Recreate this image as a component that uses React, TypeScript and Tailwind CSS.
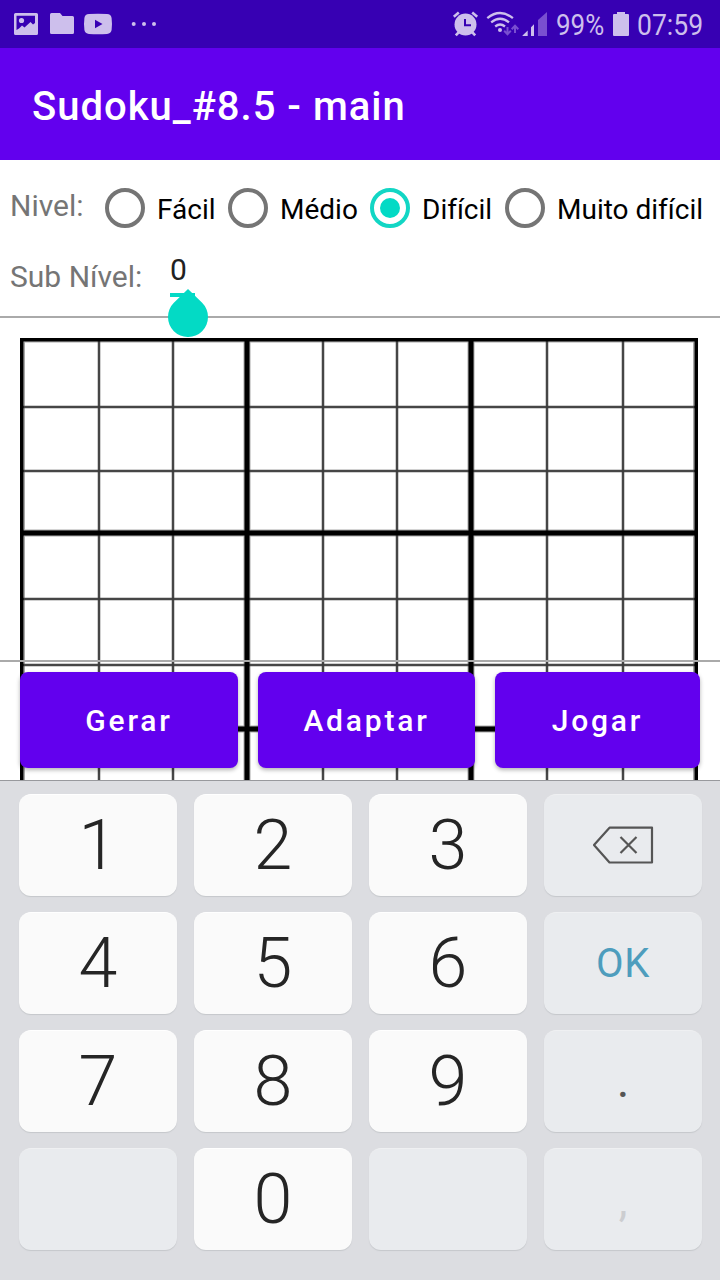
import React, { useState } from "react";

const LEVELS = ["Fácil", "Médio", "Difícil", "Muito difícil"];
const RADIO_BOXES = ["w-[123px]", "w-[142px]", "w-[135px]", "w-[215px]"];
const ACTIONS = [
  { label: "Gerar", box: "w-[218px]" },
  { label: "Adaptar", box: "w-[217px]" },
  { label: "Jogar", box: "w-[205px]" },
];

const THIN_COLUMNS = [99, 173, 323, 397, 547, 623];
const THICK_COLUMNS = [247, 471];
const THIN_ROWS = [407, 471, 599, 665];
const THICK_ROWS = [533, 729];

function StatusBar() {
  return (
    <header className="flex h-12 shrink-0 items-start bg-[#3700b3] text-[#cdbfec]">
      <svg className="h-12 w-[170px]" viewBox="0 0 170 48" fill="currentColor">
        <path
          fillRule="evenodd"
          d="M15.500 13h21a1.500 1.500 0 0 1 1.500 1.500v19a1.500 1.500 0 0 1-1.500 1.500h-21a1.500 1.500 0 0 1-1.500-1.500v-19a1.500 1.500 0 0 1 1.500-1.500Zm1 2.700v14.300l2.500-1.500 3-3 2.500 2 6-5.500 2.500 2.500 2-1.500V15.700Z"
        />
        <circle cx="21.500" cy="20.500" r="2.600" />
        <path d="M51.500 13H60l2.500 3H72.500a1.500 1.500 0 0 1 1.500 1.500V32.500a1.500 1.500 0 0 1-1.500 1.500h-21a1.500 1.500 0 0 1-1.500-1.500v-18a1.500 1.500 0 0 1 1.500-1.500Z" />
        <path
          fillRule="evenodd"
          d="M89 14q9-.7 18 0 4 0 4.600 4 .8 6 0 12-.6 3.600-4.600 4-9 .7-18 0-4-.4-4.600-4-.8-6 0-12 .6-4 4.600-4Zm6 5.800v8.400l7.500-4.200Z"
        />
        <circle cx="133.700" cy="24" r="2" />
        <circle cx="144" cy="24" r="2" />
        <circle cx="154" cy="24" r="2" />
      </svg>
      <svg className="ml-[270px] h-12 w-[116px] shrink-0" viewBox="440 0 116 48" fill="none">
        <circle cx="465.500" cy="24.500" r="11" fill="currentColor" />
        <path
          d="m453.800 16.800 5-4.200m18.400 4.200-5-4.200"
          stroke="currentColor"
          strokeWidth="2.600"
        />
        <path d="m459 32-3.200 3.400M472 32l3.200 3.400" stroke="currentColor" strokeWidth="2.600" />
        <path d="M465 19v6.200h6" stroke="#3700b3" strokeWidth="2" />
        <path
          d="M487.300 18.200q12.700-10.400 25.600 0M491.200 22.400q8.900-7.200 17.800 0M495.200 26.500q4.900-3.900 9.800 0"
          stroke="currentColor"
          strokeWidth="2.300"
        />
        <circle cx="500" cy="30" r="2" fill="currentColor" />
        <path
          d="M507.500 27v7m-3.300-3.200 3.300 3.400 3.300-3.400M515 33v-7m-3.300 3.200 3.300-3.400 3.300 3.400"
          stroke="#794fd0"
          strokeWidth="2"
        />
        <path d="M522.500 36v-.5l5.200-5V36ZM531 36v-8.800l3-2.900V36Z" fill="currentColor" />
        <path d="M538 36V20l9-8v24Z" fill="#794fd0" />
      </svg>
      <span className="mt-[7px] inline-block w-[52px] origin-left scale-x-[.865] whitespace-nowrap text-[30px] leading-[35px]">
        99%
      </span>
      <svg className="ml-[5px] h-12 w-4" viewBox="613 0 16 48" fill="currentColor">
        <path d="M614 14h3v-2h8v2h3q1 0 1 1v20q0 1-1 1h-14q-1 0-1-1V15q0-1 1-1Z" />
      </svg>
      <span className="ml-2 mt-[7px] inline-block w-[66px] origin-left scale-x-[.885] whitespace-nowrap text-[30px] leading-[35px]">
        07:59
      </span>
    </header>
  );
}

function LevelPicker() {
  const [level, setLevel] = useState(2);
  return (
    <div className="flex h-[76px] pl-[10px] pt-6">
      <span className="w-[95px] pt-1 text-[30px] leading-[35px] text-[#757575]">Nivel:</span>
      {LEVELS.map((name, i) => (
        <button
          key={name}
          onClick={() => setLevel(i)}
          className={"flex h-12 shrink-0 items-center gap-3 " + RADIO_BOXES[i]}
        >
          <svg className="size-10 shrink-0" viewBox="0 0 40 40" fill="none">
            <circle cx="20" cy="20" r="18" stroke={i === level ? "#12d6c4" : "#757575"} strokeWidth="4" />
            {i === level && <circle cx="20" cy="20" r="10" fill="#03dac5" />}
          </svg>
          <span className="whitespace-nowrap pt-1 text-[28px] leading-8 text-black">{name}</span>
        </button>
      ))}
    </div>
  );
}

function SubLevel() {
  return (
    <div className="relative flex h-[82px] border-b-2 border-[#aaaaaa] pl-[10px]">
      <span className="w-[160px] pt-[23px] text-[30px] leading-[35px] text-[#757575]">Sub Nível:</span>
      <div className="h-[61px] w-[25px] border-b-4 border-[#03dac5] pt-4 text-[30px] leading-[35px] text-[#212121]">
        0
      </div>
      <svg className="absolute left-[168px] top-[53px] h-12 w-10" viewBox="0 0 40 48">
        <path d="M20 0 34.140 13.860A20 20 0 1 1 5.860 13.860Z" fill="#03dac5" />
      </svg>
    </div>
  );
}

function Board() {
  return (
    <svg className="block h-[442px] w-[720px]" viewBox="0 338 720 442">
      <g stroke="#aaa" strokeWidth="7">
        {THICK_COLUMNS.map((x) => (
          <path key={x} d={`M${x} 338V780`} />
        ))}
        {THICK_ROWS.map((y) => (
          <path key={y} d={`M20 ${y}H698`} />
        ))}
      </g>
      <path d="M24.400 780V341.800H693.600V780" fill="none" stroke="#aaa" strokeWidth="1.200" />
      <g stroke="#3c3c3c" strokeWidth="2.500" strokeOpacity=".95">
        {THIN_COLUMNS.map((x) => (
          <path key={x} d={`M${x} 338V780`} />
        ))}
        {THIN_ROWS.map((y) => (
          <path key={y} d={`M20 ${y}H698`} />
        ))}
      </g>
      <g stroke="#000" strokeWidth="5">
        {THICK_COLUMNS.map((x) => (
          <path key={x} d={`M${x} 338V780`} />
        ))}
        {THICK_ROWS.map((y) => (
          <path key={y} d={`M20 ${y}H698`} />
        ))}
      </g>
      <path d="M21.800 780V339.700H696.200V780" fill="none" stroke="#000" strokeWidth="3.600" />
    </svg>
  );
}

function Key({ label, plain, children }: { label?: string; plain?: boolean; children?: React.ReactNode }) {
  return (
    <button
      className={
        "flex h-[102px] items-center justify-center rounded-xl border-t pb-0.5 shadow-[0_1px_1px_#c5c7cb] " +
        (plain ? "border-[#eff0f2] bg-[#e9ebee]" : "border-white bg-[#fafafa]")
      }
    >
      {label && <span className="text-[70px] font-light leading-[82px] text-[#252525]">{label}</span>}
      {children}
    </button>
  );
}

function Keypad() {
  return (
    <section className="grid h-[500px] grid-cols-[repeat(4,158px)] content-start gap-x-[17px] gap-y-4 border-t border-[#98999d] bg-[#dcdde1] pl-[19px] pt-[13px]">
      <Key label="1" />
      <Key label="2" />
      <Key label="3" />
      <Key plain>
        <svg className="h-10 w-16" viewBox="591 825 64 40" fill="none" stroke="#555" strokeWidth="2.200">
          <path d="M594 845 609.500 827.700H652V862.500H609.500Z" strokeLinejoin="round" />
          <path d="m620.500 837 16 16m0-16-16 16" />
        </svg>
      </Key>
      <Key label="4" />
      <Key label="5" />
      <Key label="6" />
      <Key plain>
        <span className="pt-0.5 text-[40px] leading-[48px] tracking-[.6px] text-[#4e9dbd]">OK</span>
      </Key>
      <Key label="7" />
      <Key label="8" />
      <Key label="9" />
      <Key plain>
        <span className="text-[48px] leading-[54px] text-[#555]">.</span>
      </Key>
      <Key plain />
      <Key label="0" />
      <Key plain />
      <Key plain>
        <span className="pt-1 text-[44px] leading-[54px] text-[#cccdd0]">,</span>
      </Key>
    </section>
  );
}

export default function App() {
  return (
    <main className="flex h-[1280px] w-[720px] flex-col overflow-hidden bg-white font-['Roboto',sans-serif]">
      <StatusBar />
      <h1 className="flex h-28 shrink-0 items-center bg-[#6200ee] pl-8 pt-[5px] text-[40px] font-medium leading-[47px] tracking-[1px] text-white">
        Sudoku_#8.5 - main
      </h1>
      <section className="relative z-10 h-[178px] shrink-0">
        <LevelPicker />
        <SubLevel />
      </section>
      <section className="relative h-[442px] shrink-0 overflow-hidden">
        <Board />
        <div className="absolute inset-x-0 bottom-0 flex h-[120px] gap-5 border-t-2 border-[#aaa] pl-5 pt-[10px]">
          {ACTIONS.map(({ label, box }) => (
            <button
              key={label}
              className={
                "h-24 rounded-lg bg-[#6200ee] text-[30px] font-medium tracking-[2.800px] text-white shadow-[0_2px_4px_rgba(0,0,0,.3)] " +
                box
              }
            >
              {label}
            </button>
          ))}
        </div>
      </section>
      <Keypad />
    </main>
  );
}
